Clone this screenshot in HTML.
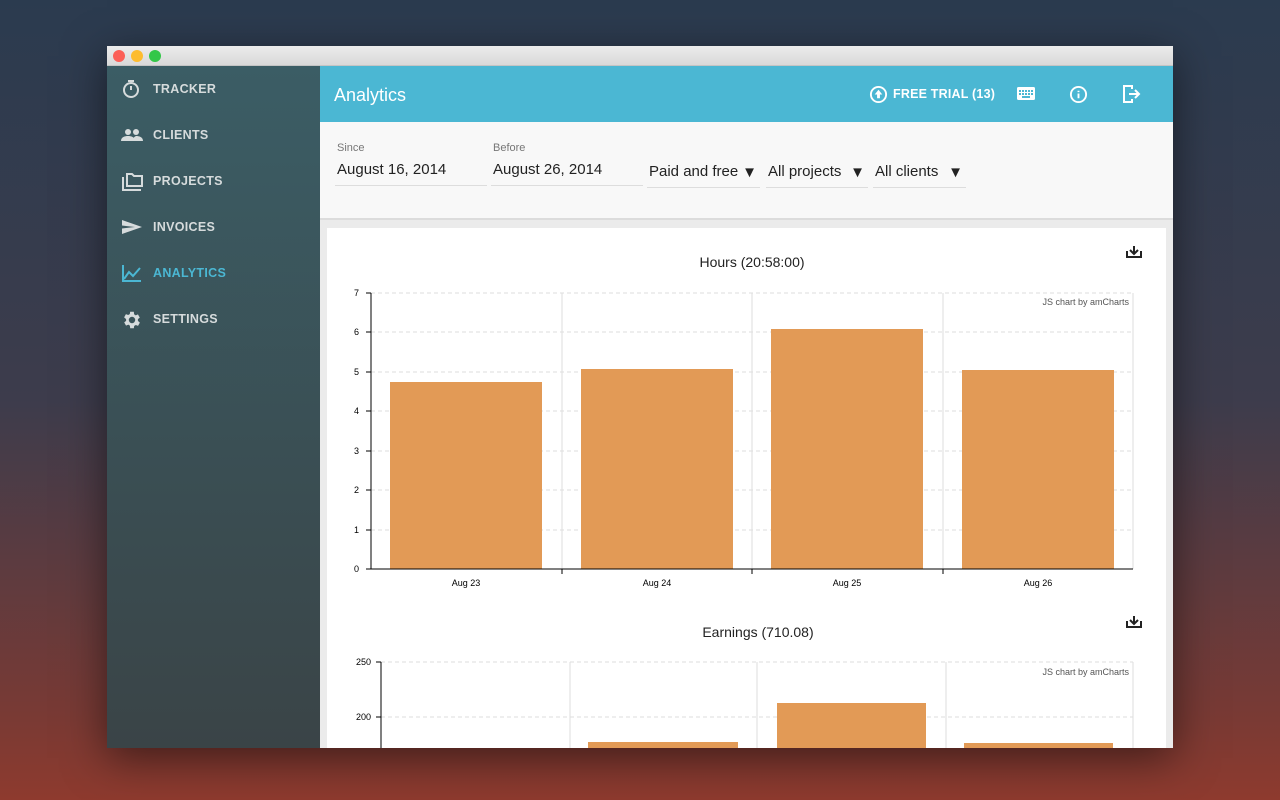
<!DOCTYPE html>
<html><head><style>
*{margin:0;padding:0;box-sizing:border-box}
body{width:1280px;height:800px;overflow:hidden;background:linear-gradient(#2b3b4f 0%,#3d3c4c 50%,#7a3a34 90%,#8e3a2e 100%);font-family:"Liberation Sans",sans-serif;position:relative}
.win{position:absolute;left:107px;top:46px;width:1066px;height:702px;background:#ebebeb;box-shadow:0 10px 40px rgba(0,0,0,.5);overflow:hidden}
.tb{height:20px;background:linear-gradient(#ececec,#d9d9d9);position:relative;border-bottom:1px solid #c4c4c4}
.dot{position:absolute;top:4px;width:12px;height:12px;border-radius:50%}
.side{position:absolute;left:0;top:20px;width:213px;height:682px;background:linear-gradient(#3b5d65,#3a4447)}
.item{position:absolute;left:0;height:20px;width:213px;color:#d6dbdc;font-size:12.5px;font-weight:bold;letter-spacing:.3px}
.item span{position:absolute;left:46px;top:3px}
.item svg{position:absolute;left:14px;top:0}
.hdr{position:absolute;left:213px;top:20px;width:853px;height:56px;background:#4bb7d3;color:#fff}
.filt{position:absolute;left:213px;top:76px;width:853px;height:98px;background:#f8f8f8;border-bottom:2px solid #dcdcdc}
.lbl{position:absolute;font-size:11px;color:#777}
.val{position:absolute;font-size:15px;color:#222;border-bottom:1px solid #ddd;height:25px;padding-left:2px}
.arr{position:absolute;right:3px;top:1px;font-size:15px}
.card{position:absolute;left:220px;top:182px;width:839px;height:540px;background:#fff}
</style></head><body>
<div class="win">
<div class="tb"><div class="dot" style="left:6px;background:#fc5f57"></div><div class="dot" style="left:24px;background:#fdbc2e"></div><div class="dot" style="left:42px;background:#33c748"></div></div>
<div class="side">
<div class="item" style="top:13px"><svg width="20" height="20" viewBox="0 0 20 20" fill="none" stroke="#d6dbdc" stroke-width="2"><circle cx="10" cy="11" r="7"/><path d="M7 2h6M10 7v4"/></svg><span>TRACKER</span></div>
<div class="item" style="top:59px"><svg width="22" height="20" viewBox="0 0 22 20" fill="#d6dbdc"><circle cx="7" cy="7" r="3"/><circle cx="15" cy="7" r="3"/><path d="M0 16c0-4 4-5 7-5s7 1 7 5zM12 16c0-3 1-4 3-5 3 0 7 1 7 5z"/></svg><span>CLIENTS</span></div>
<div class="item" style="top:105px"><svg width="24" height="20" viewBox="0 0 24 20" fill="none" stroke="#d6dbdc" stroke-width="2"><path d="M2 6v13h18"/><path d="M6 3h5l2 2h8v10H6z"/></svg><span>PROJECTS</span></div>
<div class="item" style="top:151px"><svg width="22" height="20" viewBox="0 0 22 20" fill="#d6dbdc"><path d="M1 3l20 7-20 7 0-5.5 13-1.5-13-1.5z"/></svg><span>INVOICES</span></div>
<div class="item" style="top:197px;color:#4bb7d3"><svg width="22" height="20" viewBox="0 0 22 20" fill="none" stroke="#4bb7d3" stroke-width="2"><path d="M2 2v16h18M3 16l5-7 4 4 7-8"/></svg><span>ANALYTICS</span></div>
<div class="item" style="top:243px"><svg width="22" height="22" viewBox="0 0 24 24" fill="#d6dbdc"><path d="M19.4 13a7.5 7.5 0 000-2l2.1-1.6-2-3.5-2.5 1a7 7 0 00-1.7-1L15 3h-4l-.4 2.6a7 7 0 00-1.7 1l-2.5-1-2 3.5L6.6 11a7.5 7.5 0 000 2l-2.1 1.6 2 3.5 2.5-1a7 7 0 001.7 1L11 21h4l.4-2.6a7 7 0 001.7-1l2.5 1 2-3.5zM13 15.5a3.5 3.5 0 110-7 3.5 3.5 0 010 7z" transform="translate(-1 0)"/></svg><span>SETTINGS</span></div>
</div>
<div class="hdr">
<div style="position:absolute;left:14px;top:19px;font-size:18px">Analytics</div>
<svg style="position:absolute;left:549px;top:19px" width="19" height="19" viewBox="0 0 20 20"><circle cx="10" cy="10" r="8" fill="none" stroke="#fff" stroke-width="2"/><path d="M10 5l-4 5h2.5v4h3v-4H14z" fill="#fff"/></svg>
<div style="position:absolute;left:573px;top:21px;font-size:12.5px;font-weight:bold;letter-spacing:.2px">FREE TRIAL (13)</div>
<svg style="position:absolute;left:697px;top:21px" width="18" height="13" viewBox="0 0 18 13"><rect width="18" height="13" rx="1.5" fill="#fff"/><g fill="#4bb7d3"><rect x="2" y="3" width="2" height="2"/><rect x="5" y="3" width="2" height="2"/><rect x="8" y="3" width="2" height="2"/><rect x="11" y="3" width="2" height="2"/><rect x="14" y="3" width="2" height="2"/><rect x="2" y="6" width="2" height="2"/><rect x="5" y="6" width="2" height="2"/><rect x="8" y="6" width="2" height="2"/><rect x="11" y="6" width="2" height="2"/><rect x="14" y="6" width="2" height="2"/><rect x="5" y="9" width="8" height="2"/></g></svg>
<svg style="position:absolute;left:749px;top:19px" width="19" height="19" viewBox="0 0 20 20"><circle cx="10" cy="10" r="8" fill="none" stroke="#fff" stroke-width="2"/><path d="M10 9v5M10 6v1.5" stroke="#fff" stroke-width="2"/></svg>
<svg style="position:absolute;left:802px;top:18px" width="20" height="20" viewBox="0 0 20 20" fill="none" stroke="#fff" stroke-width="2"><path d="M10 5V2H2v16h8v-3"/><path d="M7 10h9M13 6l4 4-4 4"/></svg>
</div>
<div class="filt">
<div class="lbl" style="left:17px;top:20px">Since</div>
<div class="val" style="left:15px;top:39px;width:152px">August 16, 2014</div>
<div class="lbl" style="left:173px;top:20px">Before</div>
<div class="val" style="left:171px;top:39px;width:152px">August 26, 2014</div>
<div class="val" style="left:327px;top:41px;width:113px">Paid and free<span class="arr">▼</span></div>
<div class="val" style="left:446px;top:41px;width:102px">All projects<span class="arr">▼</span></div>
<div class="val" style="left:553px;top:41px;width:93px">All clients<span class="arr">▼</span></div>
</div>
<div class="card">
<svg width="839" height="540" viewBox="327 228 839 540" font-family="Liberation Sans, sans-serif" style="position:absolute;left:0;top:0">
<text x="752" y="267" font-size="14" fill="#222" text-anchor="middle">Hours (20:58:00)</text>
<path d="M1127 251v6h14v-6M1134 246v8M1130 250l4 4 4-4" stroke="#222" stroke-width="2" fill="none"/>
<g stroke="#ddd" stroke-dasharray="4,3"><path d="M371 293H1133M371 332H1133M371 372H1133M371 411H1133M371 451H1133M371 490H1133M371 530H1133"/></g>
<g stroke="#ddd"><path d="M562 293v276M752 293v276M943 293v276M1133 293v276"/></g>
<text x="1129" y="305" font-size="9" fill="#555" text-anchor="end">JS chart by amCharts</text>
<g fill="#e29a56"><rect x="390" y="382" width="152" height="187"/><rect x="581" y="369" width="152" height="200"/><rect x="771" y="329" width="152" height="240"/><rect x="962" y="370" width="152" height="199"/></g>
<path d="M371 293v276H1133M366 293h5M366 332h5M366 372h5M366 411h5M366 451h5M366 490h5M366 530h5M366 569h5M562 569v5M752 569v5M943 569v5" stroke="#000" fill="none"/>
<g font-size="9" fill="#000" text-anchor="end"><text x="359" y="296">7</text><text x="359" y="335">6</text><text x="359" y="375">5</text><text x="359" y="414">4</text><text x="359" y="454">3</text><text x="359" y="493">2</text><text x="359" y="533">1</text><text x="359" y="572">0</text></g>
<g font-size="9" fill="#000" text-anchor="middle"><text x="466" y="586">Aug 23</text><text x="657" y="586">Aug 24</text><text x="847" y="586">Aug 25</text><text x="1038" y="586">Aug 26</text></g>
<text x="758" y="637" font-size="14" fill="#222" text-anchor="middle">Earnings (710.08)</text>
<path d="M1127 621v6h14v-6M1134 616v8M1130 620l4 4 4-4" stroke="#222" stroke-width="2" fill="none"/>
<g stroke="#ddd" stroke-dasharray="4,3"><path d="M381 662H1133M381 717H1133"/></g>
<g stroke="#ddd"><path d="M570 662v100M757 662v100M946 662v100M1133 662v100"/></g>
<text x="1129" y="675" font-size="9" fill="#555" text-anchor="end">JS chart by amCharts</text>
<g fill="#e29a56"><rect x="588" y="742" width="150" height="30"/><rect x="777" y="703" width="149" height="70"/><rect x="964" y="743" width="149" height="30"/></g>
<path d="M381 662v100M376 662h5M376 717h5" stroke="#000" fill="none"/>
<g font-size="9" fill="#000" text-anchor="end"><text x="371" y="665">250</text><text x="371" y="720">200</text></g>
</svg>
</div>
</div>
</body></html>
